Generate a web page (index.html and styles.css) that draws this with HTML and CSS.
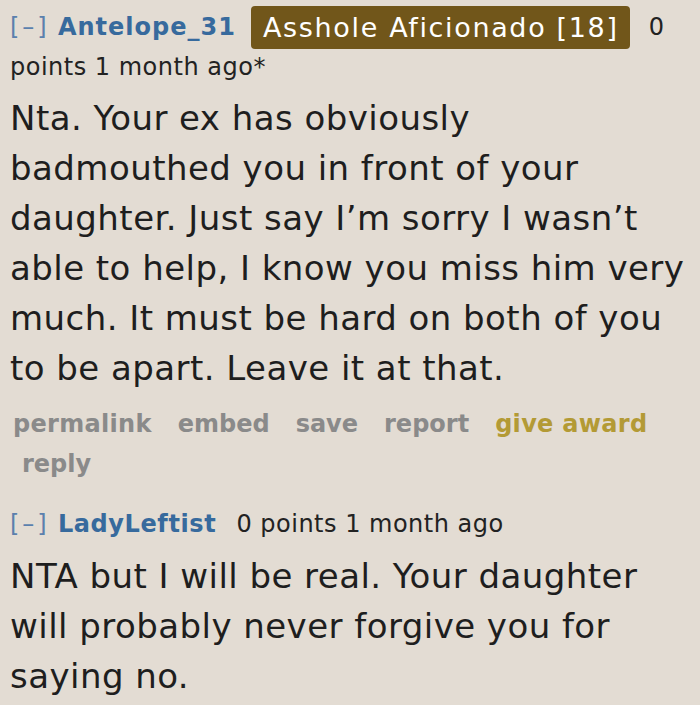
FILE: index.html
```html
<!DOCTYPE html>
<html>
<head>
<meta charset="utf-8">
<link rel="stylesheet" href="styles.css">
</head>
<body>
<div class="comment">
  <p class="tagline"><span class="expand">[–]</span> <span class="author">Antelope_31</span> <span class="flair">Asshole Aficionado [18]</span> <span class="score">0</span> points <span class="time">1 month ago</span><span class="edited">*</span></p>
  <div class="md">Nta. Your ex has obviously badmouthed you in front of your daughter. Just say I’m sorry I wasn’t able to help, I know you miss him very much. It must be hard on both of you to be apart. Leave it at that.</div>
  <ul class="buttons">
    <li>permalink</li>
    <li>embed</li>
    <li>save</li>
    <li>report</li>
    <li class="award">give award</li>
    <li class="reply">reply</li>
  </ul>
</div>
<div class="comment second">
  <p class="tagline"><span class="expand">[–]</span> <span class="author">LadyLeftist</span> <span class="score gap">0 points</span> <span class="time">1 month ago</span></p>
  <div class="md">NTA but I will be real. Your daughter will probably never forgive you for saying no.</div>
</div>
</body>
</html>
```

FILE: styles.css
```css
html, body {
  margin: 0;
  padding: 0;
  background: #e3dcd3;
}
body {
  font-family: "DejaVu Sans", Verdana, sans-serif;
  color: #222;
  padding: 0 4px 0 10px;
}
.tagline {
  margin: 0;
  padding-top: 7px;
  font-size: 24px;
  line-height: 40px;
  letter-spacing: 0.5px;
  color: #222;
}
.second .tagline {
  padding-top: 0;
}
.expand {
  color: #5b80ad;
  letter-spacing: 3px;
}
.author {
  color: #376a9d;
  font-weight: bold;
  letter-spacing: 1px;
}
.second .author {
  letter-spacing: 0.6px;
}
.flair {
  display: inline-block;
  background: #71561a;
  color: #fff;
  font-size: 27px;
  line-height: 43px;
  letter-spacing: 1.65px;
  padding: 0 11px 0 12px;
  border-radius: 4px;
  margin: -3px 11px -3px 7px;
  vertical-align: -2px;
}
.score.gap {
  margin-left: 12px;
}
.md {
  font-size: 34px;
  line-height: 50px;
  letter-spacing: 0.45px;
  margin-top: 6px;
  color: #1e1e1e;
}
.buttons {
  list-style: none;
  margin: 11px 0 0 0;
  padding: 0 0 0 3px;
  display: flex;
  flex-wrap: wrap;
  column-gap: 26px;
  font-size: 24px;
  line-height: 40px;
  font-weight: bold;
  color: #8a8a8a;
}
.buttons li:first-child {
  letter-spacing: 0.3px;
}
.buttons .award {
  color: #b39a35;
  letter-spacing: 0.3px;
}
.buttons .reply {
  margin-left: 9px;
}
.second {
  margin-top: 20px;
}
.second .md {
  margin-top: 7px;
}
```
